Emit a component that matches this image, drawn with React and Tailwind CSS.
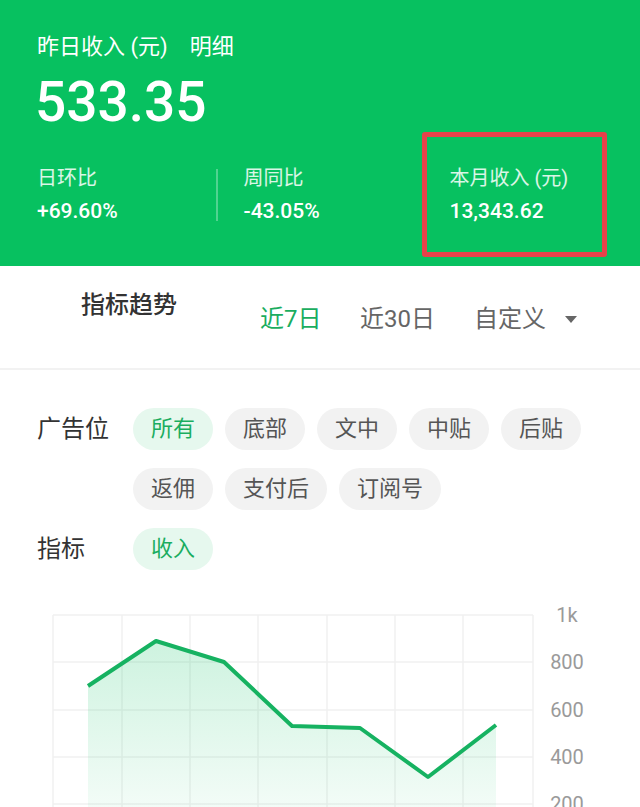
import React from "react";

const GREEN = "#07c160";
const FONT = { fontFamily: 'Roboto, "Noto Sans CJK SC", sans-serif' };

const adRow1 = ["所有", "底部", "文中", "中贴", "后贴"];
const adRow2 = ["返佣", "支付后", "订阅号"];

const points = [
  [88, 86],
  [156, 41],
  [224, 62],
  [292, 126],
  [360, 128],
  [428, 177],
  [496, 125]
];

function Chip({ label, active }) {
  return (
    <div
      className={`h-[42px] px-[18px] rounded-full flex items-center justify-center text-[22px] leading-none ${
        active ? "bg-[#e6f8ee] text-[#1aad5f]" : "bg-[#f2f2f2] text-[#555]"
      }`}
    >
      {label}
    </div>
  );
}

function TrendChart() {
  const xs = [53, 122, 190, 258, 327, 395, 463, 533];
  const ys = [15, 62, 110, 157, 204];
  const labels = ["1k", "800", "600", "400", "200"];
  const line = points.map(p => p.join(",")).join(" ");
  const area = `M88,207 L${points.map(p => p.join(",")).join(" L")} L496,207 Z`;

  return (
    <svg width="640" height="207" viewBox="0 0 640 207" className="block">
      <defs>
        <linearGradient id="fill" x1="0" y1="0" x2="0" y2="1">
          <stop offset="0%" stopColor="#07c160" stopOpacity="0.2" />
          <stop offset="100%" stopColor="#07c160" stopOpacity="0.05" />
        </linearGradient>
      </defs>
      {xs.map(x => (
        <line key={x} x1={x} y1="15" x2={x} y2="207" stroke="#f0f0f0" strokeWidth="1.5" />
      ))}
      {ys.map(y => (
        <line key={y} x1="53" y1={y} x2="533" y2={y} stroke="#f0f0f0" strokeWidth="1.5" />
      ))}
      <path d={area} fill="url(#fill)" />
      <polyline points={line} fill="none" stroke="#16b261" strokeWidth="4" strokeLinejoin="round" />
      {ys.map((y, i) => (
        <text
          key={y}
          x="567"
          y={y + 7}
          textAnchor="middle"
          fontSize="20"
          fill="#9a9a9a"
          style={FONT}
        >
          {labels[i]}
        </text>
      ))}
    </svg>
  );
}

export default function App() {
  return (
    <div className="w-[640px] h-[807px] overflow-hidden bg-white" style={FONT}>
      {/* green summary header */}
      <div className="pt-[32px] pb-[9px] text-white" style={{ background: GREEN }}>
        <div className="pl-[37px] flex items-center text-[22px] leading-[30px]">
          <span>昨日收入 (元)</span>
          <span className="ml-[22px]">明细</span>
        </div>
        <div className="pl-[35px] mt-[10px] text-[55px] leading-[60px] font-medium">533.35</div>

        <div className="pl-[37px] flex items-center">
          <div className="w-[179px]">
            <div className="text-[20px] leading-[28px] text-white/85">日环比</div>
            <div className="text-[21px] leading-[30px] font-medium mt-[4px]">+69.60%</div>
          </div>
          <div className="w-[1.5px] h-[52px] bg-white/30" />
          <div className="ml-[26px] w-[178px]">
            <div className="text-[20px] leading-[28px] text-white/85">周同比</div>
            <div className="text-[21px] leading-[30px] font-medium mt-[4px]">-43.05%</div>
          </div>
          <div className="w-[185px] h-[125px] border-[5px] border-[#e8414a] rounded-[3px] pl-[23px] flex flex-col justify-center">
            <div className="text-[20px] leading-[28px] text-white/85">本月收入 (元)</div>
            <div className="text-[21px] leading-[30px] font-medium mt-[4px]">13,343.62</div>
          </div>
        </div>
      </div>

      {/* trend header */}
      <div className="h-[104px] flex items-start border-b-2 border-[#f2f2f2]">
        <div className="ml-[81px] mt-[24px] text-[24px] leading-[30px] text-[#333] font-medium">指标趋势</div>
        <div className="ml-[83px] mt-[38px] flex items-center text-[24px] leading-[30px]">
          <span className="w-[100px] text-[#1aad5f]">近7日</span>
          <span className="w-[114px] text-[#666]">近30日</span>
          <span className="text-[#666]">自定义</span>
          <svg width="14" height="10" viewBox="0 0 14 10" className="ml-[18px]">
            <path d="M1 2 L13 2 L7 9 Z" fill="#666" />
          </svg>
        </div>
      </div>

      {/* filters */}
      <div className="pt-[38px] pl-[37px] flex flex-col gap-[18px]">
        <div className="flex items-start">
          <div className="w-[96px] h-[42px] flex items-center text-[24px] text-[#333]">广告位</div>
          <div className="flex flex-col gap-[18px]">
            <div className="flex gap-[12px]">
              {adRow1.map((t, i) => (
                <Chip key={t} label={t} active={i === 0} />
              ))}
            </div>
            <div className="flex gap-[12px]">
              {adRow2.map(t => (
                <Chip key={t} label={t} />
              ))}
            </div>
          </div>
        </div>
        <div className="flex items-start">
          <div className="w-[96px] h-[42px] flex items-center text-[24px] text-[#333]">指标</div>
          <Chip label="收入" active />
        </div>
      </div>

      <div className="mt-[30px]">
        <TrendChart />
      </div>
    </div>
  );
}
